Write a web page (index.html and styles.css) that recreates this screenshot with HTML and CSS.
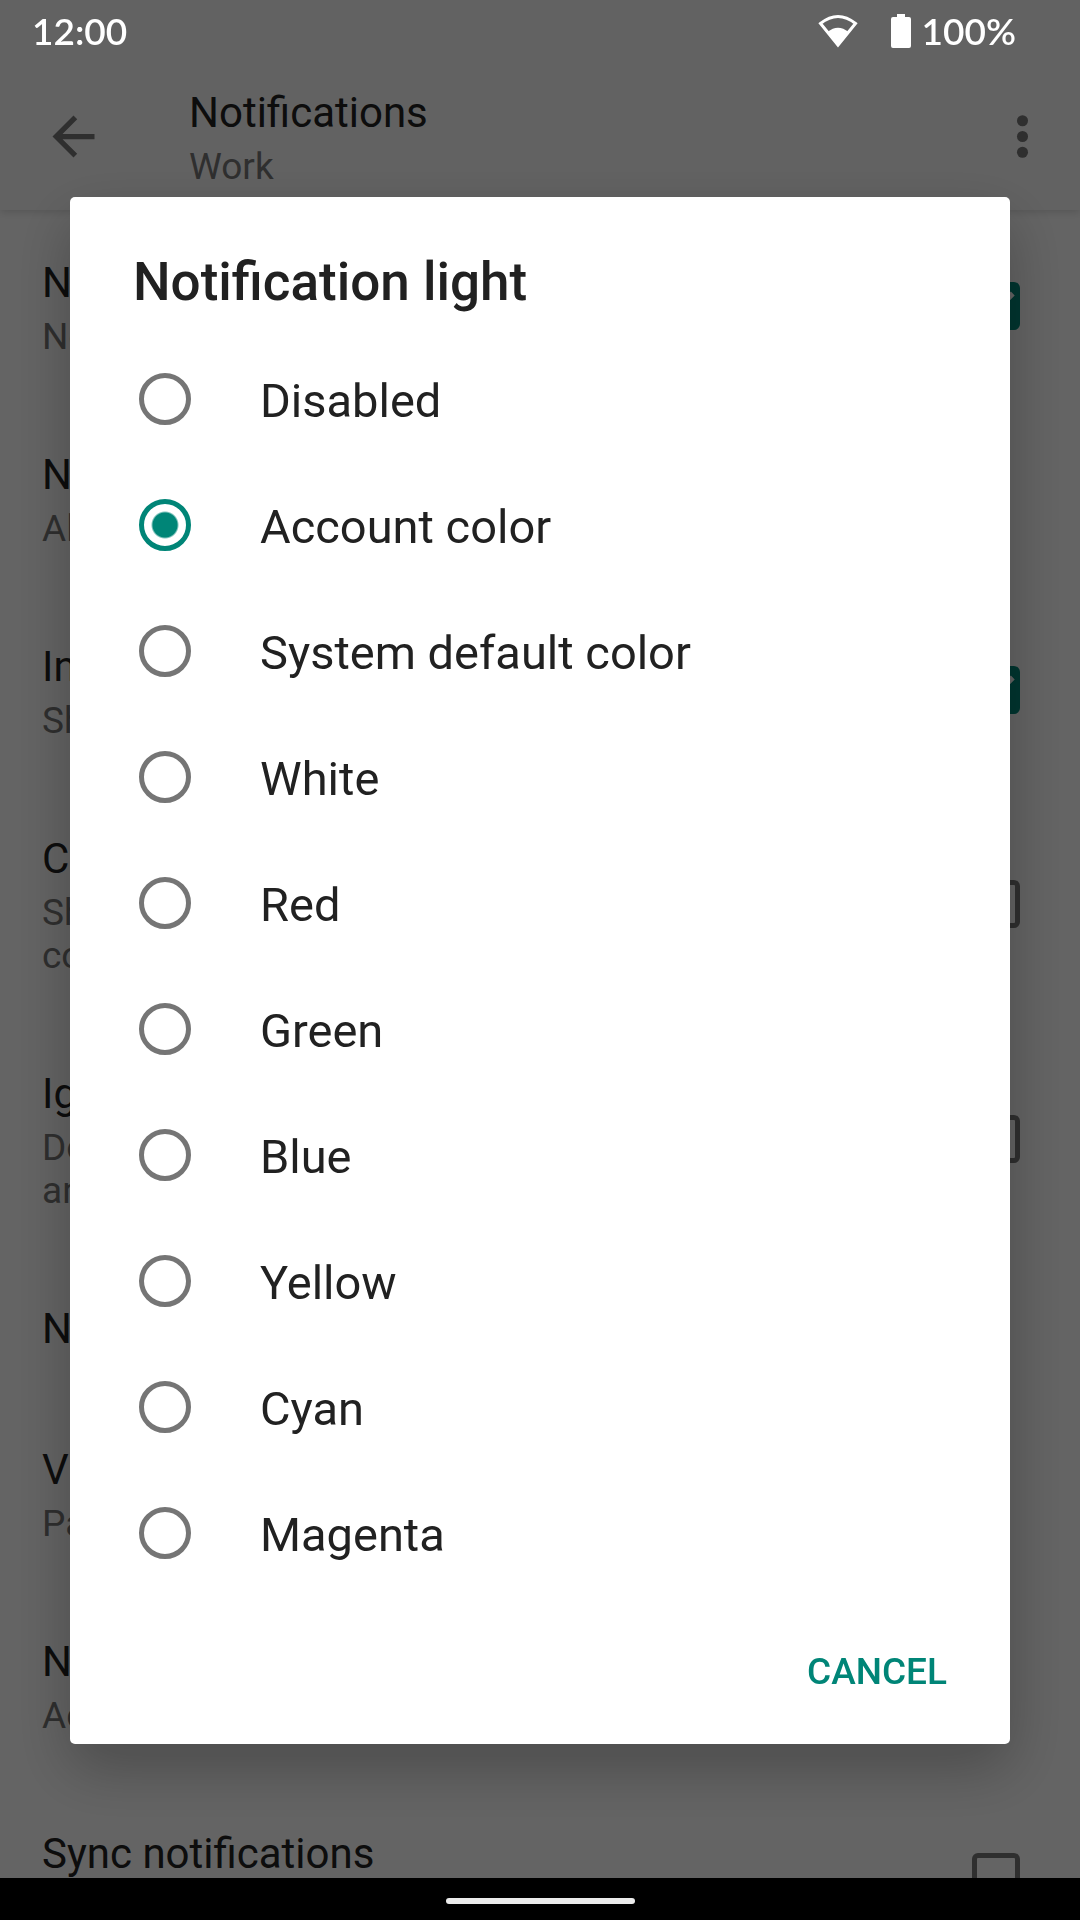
FILE: index.html
```html
<!DOCTYPE html>
<html lang="en">
<head>
<meta charset="utf-8">
<meta name="viewport" content="width=device-width, initial-scale=1">
<title>Notifications</title>
<link rel="stylesheet" href="styles.css">
</head>
<body>
<div class="status-bar">
  <span class="clock">12:00</span>
  <svg class="wifi" viewBox="0 0 40 34" aria-hidden="true">
    <path d="M2.500 9.500Q20-4.500 37.500 9.500L20 31Z" fill="none" stroke="#fff" stroke-width="3"/>
    <path d="M9.500 18Q20 9.500 30.500 18L20 31.500Z" fill="#fff"/>
  </svg>
  <svg class="battery" viewBox="0 0 20 34" aria-hidden="true">
    <path d="M6 0H14V3H18Q20 3 20 5V32Q20 34 18 34H2Q0 34 0 32V5Q0 3 2 3H6Z" fill="#fff"/>
  </svg>
  <span class="charge">100%</span>
</div>

<header class="toolbar">
  <button class="icon-button" type="button" aria-label="Back">
    <svg viewBox="0 0 24 24"><path d="M20 11H7.830l5.590-5.590L12 4l-8 8 8 8 1.410-1.410L7.830 13H20z"/></svg>
  </button>
  <div class="toolbar-text">
    <h1 class="toolbar-title">Notifications</h1>
    <p class="toolbar-subtitle">Work</p>
  </div>
  <button class="icon-button" type="button" aria-label="More options">
    <svg viewBox="0 0 24 24"><circle cx="12" cy="6" r="2.100"/><circle cx="12" cy="12" r="2.100"/><circle cx="12" cy="18" r="2.100"/></svg>
  </button>
</header>

<main class="settings">
  <label class="setting">
    <span class="setting-text"><span class="setting-title">New mail notifications</span><span class="setting-summary">Notify in status bar when mail arrives</span></span>
    <input class="check" type="checkbox" checked>
  </label>
  <div class="setting">
    <span class="setting-text"><span class="setting-title">Notifications for folders</span><span class="setting-summary">All</span></span>
  </div>
  <label class="setting">
    <span class="setting-text"><span class="setting-title">Include outgoing mail</span><span class="setting-summary">Show a notification for messages I sent</span></span>
    <input class="check" type="checkbox" checked>
  </label>
  <label class="setting">
    <span class="setting-text"><span class="setting-title">Contacts only</span><span class="setting-summary">Show notifications only for messages from<br>contacts</span></span>
    <input class="check" type="checkbox">
  </label>
  <label class="setting">
    <span class="setting-text"><span class="setting-title">Ignore chat messages</span><span class="setting-summary">Don’t show notifications for messages in<br>an email chat</span></span>
    <input class="check" type="checkbox">
  </label>
  <div class="setting">
    <span class="setting-text"><span class="setting-title">New mail ringtone</span></span>
  </div>
  <div class="setting">
    <span class="setting-text"><span class="setting-title">Vibration</span><span class="setting-summary">Pattern</span></span>
  </div>
  <div class="setting">
    <span class="setting-text"><span class="setting-title">Notification light</span><span class="setting-summary">Account color</span></span>
  </div>
  <label class="setting">
    <span class="setting-text"><span class="setting-title">Sync notifications</span><span class="setting-summary">Notify while checking for mail</span></span>
    <input class="check" type="checkbox">
  </label>
</main>

<div class="scrim">
  <form class="dialog" role="dialog" aria-modal="true" aria-labelledby="dialog-title">
    <h2 class="dialog-title" id="dialog-title">Notification light</h2>
    <div class="options" role="radiogroup" aria-labelledby="dialog-title">
      <label class="option"><input class="radio" type="radio" name="light"><span class="option-text">Disabled</span></label>
      <label class="option"><input class="radio" type="radio" name="light" checked><span class="option-text">Account color</span></label>
      <label class="option"><input class="radio" type="radio" name="light"><span class="option-text">System default color</span></label>
      <label class="option"><input class="radio" type="radio" name="light"><span class="option-text">White</span></label>
      <label class="option"><input class="radio" type="radio" name="light"><span class="option-text">Red</span></label>
      <label class="option"><input class="radio" type="radio" name="light"><span class="option-text">Green</span></label>
      <label class="option"><input class="radio" type="radio" name="light"><span class="option-text">Blue</span></label>
      <label class="option"><input class="radio" type="radio" name="light"><span class="option-text">Yellow</span></label>
      <label class="option"><input class="radio" type="radio" name="light"><span class="option-text">Cyan</span></label>
      <label class="option"><input class="radio" type="radio" name="light"><span class="option-text">Magenta</span></label>
    </div>
    <div class="actions"><button class="text-button" type="button">CANCEL</button></div>
  </form>
</div>

<nav class="nav-bar"><span class="nav-handle"></span></nav>
</body>
</html>
```

FILE: styles.css
```css
:root {
  --teal: #008577;
  --text: #212121;
  --muted: #757575;
}

* {
  box-sizing: border-box;
}

body {
  margin: 0;
  height: 100vh;
  display: flex;
  flex-direction: column;
  overflow: hidden;
  background: #fafafa;
  color: var(--text);
  font-family: Roboto, "Liberation Sans", sans-serif;
}

h1, h2, p {
  margin: 0;
  font-weight: 400;
}

button {
  border: 0;
  padding: 0;
  background: none;
  font: inherit;
}

input {
  appearance: none;
  flex: none;
  margin: 0;
}

/* System bars stay above the scrim */
.status-bar {
  position: relative;
  z-index: 3;
  flex: none;
  height: 63px;
  display: flex;
  align-items: center;
  padding: 0 64px 2px 32px;
  color: #fff;
  font: 600 37px/44px Lato, "Open Sans", sans-serif;
}

.clock {
  flex: 1;
}

.wifi {
  width: 40px;
  height: 34px;
}

.battery {
  width: 20px;
  height: 34px;
  margin: 0 11px 0 33px;
}

.nav-bar {
  position: relative;
  z-index: 3;
  flex: none;
  height: 42px;
  display: flex;
  align-items: center;
  justify-content: center;
  padding-top: 4px;
  background: #000;
}

.nav-handle {
  width: 189px;
  height: 6px;
  border-radius: 3px;
  background: #ebebeb;
}

.toolbar {
  position: relative;
  flex: none;
  height: 147px;
  display: flex;
  align-items: center;
  padding: 0 26px 0 42px;
  background: #f5f5f5;
  box-shadow: 0 -63px 0 #f5f5f5, 0 2px 8px rgba(0, 0, 0, .15);
}

.icon-button {
  width: 63px;
  height: 63px;
}

.icon-button svg {
  display: block;
  fill: var(--muted);
}

.toolbar-text {
  flex: 1;
  padding: 2px 0 0 84px;
}

.toolbar-title {
  font-size: 42px;
  line-height: 57px;
}

.toolbar-subtitle {
  color: var(--muted);
  font-size: 37px;
  line-height: 51px;
}

.settings {
  flex: 1;
  min-height: 0;
  overflow: hidden;
}

.setting {
  display: flex;
  align-items: center;
  padding: 40px 60px 40px 42px;
}

.setting-text {
  flex: 1;
  padding-top: 4px;
}

.setting-title {
  display: block;
  font-size: 42px;
  line-height: 57px;
}

.setting-summary {
  display: block;
  padding: 4px 0;
  color: var(--muted);
  font-size: 37px;
  line-height: 43px;
}

.check {
  width: 48px;
  height: 48px;
  border: 5px solid var(--muted);
  border-radius: 6px;
}

.check:checked {
  border: 0;
  background: var(--teal);
}

.check:checked::before {
  content: "";
  display: block;
  height: 100%;
  background: #fafafa;
  clip-path: polygon(39% 78%, 11% 50%, 19% 42%, 39% 62%, 81% 20%, 89% 28%);
}

.scrim {
  position: fixed;
  inset: 0;
  z-index: 2;
  display: flex;
  align-items: center;
  padding: 63px 70px 42px;
  background: rgba(0, 0, 0, .6);
}

.dialog {
  flex: 1;
  border-radius: 5px;
  background: #fff;
  box-shadow: 0 24px 60px rgba(0, 0, 0, .26);
}

.dialog-title {
  padding: 54px 63px 23px;
  font-size: 53px;
  font-weight: 500;
  line-height: 62px;
}

.option {
  display: flex;
  align-items: center;
  gap: 69px;
  height: 126px;
  padding: 0 69px;
}

.option-text {
  padding-top: 4px;
  font-size: 47px;
  line-height: 56px;
}

.radio {
  width: 52px;
  height: 52px;
  border: 5px solid var(--muted);
  border-radius: 50%;
}

.radio:checked {
  border-color: var(--teal);
  background: radial-gradient(circle, var(--teal) 12px, transparent 14px);
}

.actions {
  display: flex;
  justify-content: flex-end;
  padding: 22px 21px 20px;
}

.text-button {
  height: 106px;
  padding: 0 42px;
  color: var(--teal);
  font-size: 37px;
  font-weight: 500;
}
```
